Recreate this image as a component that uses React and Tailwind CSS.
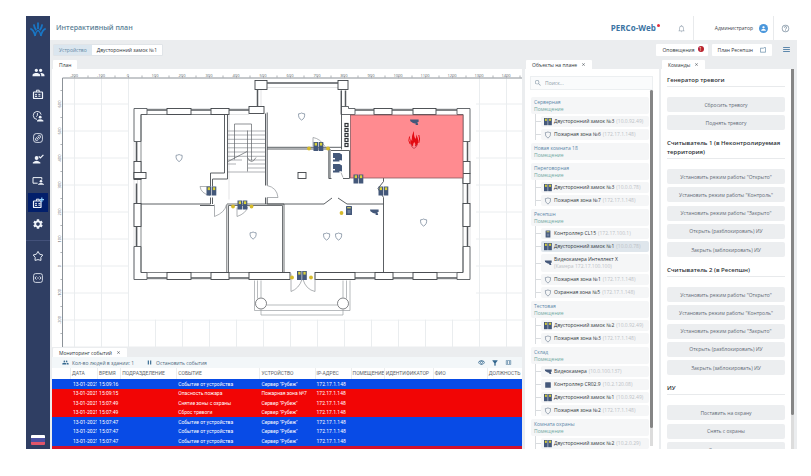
import React from "react";
import {
  MdPeople, MdSettings, MdNotificationsNone, MdPerson, MdHelpOutline, MdMenu, MdSearch, MdPause,
  MdFilterAlt, MdOutlineViewColumn, MdOutlineRemoveRedEye, MdClose,
} from "react-icons/md";

/* ---------- small device icons ---------- */

function LockShape() {
  return (
    <g>
      <rect x="0" y="0" width="4.6" height="9" fill="#44587a" />
      <rect x="5.2" y="0" width="4.6" height="9" fill="#44587a" />
      <rect x="1.2" y="0.8" width="2.3" height="2.8" fill="#d8cf3a" />
      <rect x="6.4" y="0.8" width="2.3" height="2.8" fill="#d8cf3a" />
    </g>
  );
}

function ShieldShape() {
  return (
    <path
      d="M0.6 1.3Q2.4 1.2 3.6 0.5Q4.8 1.2 6.6 1.3Q7.2 5.6 3.6 7.6Q0 5.6 0.6 1.3Z"
      fill="none" stroke="#6b7c90" strokeWidth="0.7"
    />
  );
}

function CameraShape() {
  return <path d="M0 0H8.6V2.6H7.4L8.2 5.6H5.4L6 4.2L3 3.4L0.4 1.8Z" fill="#44587a" />;
}

function ControllerShape() {
  return (
    <g>
      <rect width="6" height="9" rx="0.5" fill="#44587a" />
      <rect x="1.2" y="1" width="3.6" height="1.4" fill="#c9c46a" />
      <rect x="1.5" y="4" width="3" height="3.4" fill="#6d7f9d" />
    </g>
  );
}

function DeviceIcon({ kind }) {
  return (
    <svg viewBox="0 0 10 10" className="h-2 w-2 shrink-0" aria-hidden="true">
      {kind === "lock" && <LockShape />}
      {kind === "zone" && <g transform="translate(1 0.6) scale(1.1)"><ShieldShape /></g>}
      {kind === "camera" && <g transform="translate(1 2)"><CameraShape /></g>}
      {kind === "controller" && <g transform="translate(2 0.5)"><ControllerShape /></g>}
      {kind === "box" && <rect x="1.5" y="1.5" width="7" height="7" rx="0.5" fill="#44587a" />}
    </svg>
  );
}

/* ---------- sidebar ---------- */

function Logo() {
  return (
    <svg viewBox="0 0 16 15" className="h-[15px] w-4" fill="none" stroke="#1976c5" strokeWidth="1.8" aria-hidden="true">
      <path d="M8 0.5V7" />
      <path d="M3.8 2.4Q4.2 5.4 6.2 8.2" />
      <path d="M12.2 2.4Q11.8 5.4 9.8 8.2" />
      <path d="M0.3 6.6Q3.6 7.6 5.2 14" />
      <path d="M15.7 6.6Q12.4 7.6 10.8 14" />
      <path d="M5.2 14Q5.6 9.6 8 8.2Q10.4 9.6 10.8 14" strokeWidth="1.2" />
    </svg>
  );
}

function BadgeBriefcase({ plus }) {
  return (
    <svg viewBox="0 0 12 12" className="h-3 w-3" fill="none" stroke="#f0f4fa" strokeWidth="1" aria-hidden="true">
      <rect x="1.5" y="4" width={plus ? 7.5 : 9} height="6.5" rx="0.6" strokeWidth="1.2" />
      <path d="M4.4 4V2.2H7.2V4" />
      <circle cx="4" cy="6.6" r="0.9" fill="#f0f4fa" stroke="none" />
      <path d="M2.8 9Q4 7.6 5.2 9M6.4 6.4H8.4M6.4 8.2H8.4" />
      {plus && <path d="M9.8 0.5V5M7.6 2.7H12" stroke="#8fd0ff" strokeWidth="1.2" />}
    </svg>
  );
}

function ClockPerson() {
  return (
    <svg viewBox="0 0 12 12" className="h-3 w-3" fill="none" stroke="#f0f4fa" strokeWidth="0.9" aria-hidden="true">
      <path d="M5 9.4A4 4 0 1 1 9.2 4.6" />
      <path d="M5.4 3V5.6L4.2 6.6" />
      <circle cx="8.2" cy="7.2" r="1.4" fill="#f0f4fa" stroke="none" />
      <path d="M5 11.4V10.6Q8.2 8 11.4 10.6V11.4Z" fill="#f0f4fa" stroke="none" />
    </svg>
  );
}

function LinkBox() {
  return (
    <svg viewBox="0 0 12 12" className="h-3 w-3" fill="none" stroke="#e3e9f2" strokeWidth="0.9" aria-hidden="true">
      <rect x="1.6" y="1.6" width="8.8" height="8.8" rx="2.6" />
      <path d="M3.8 8.3Q2.9 7 4.2 5.9L5.6 4.6M8.2 3.7Q9.1 5 7.8 6.1L6.4 7.4M4.8 7.2L7.2 4.8M6 4.2Q7.4 2.8 8.3 3.8M6 7.8Q4.6 9.2 3.7 8.2" />
    </svg>
  );
}

function ScreenPerson() {
  return (
    <svg viewBox="0 0 12 12" className="h-3 w-3" fill="none" stroke="#f0f4fa" strokeWidth="1" aria-hidden="true">
      <path d="M5.6 8.2H1V2.6H9.8V4.6" />
      <circle cx="9" cy="6.2" r="1.3" fill="#f0f4fa" stroke="none" />
      <path d="M6 9.8V9.2Q9 7 12 9.2V9.8Z" fill="#f0f4fa" stroke="none" />
    </svg>
  );
}

function PersonCheck() {
  return (
    <svg viewBox="0 0 12 12" className="h-3 w-3" aria-hidden="true">
      <circle cx="4.6" cy="5" r="1.9" fill="#f0f4fa" />
      <path d="M0.8 10.4V9.4Q4.6 6.2 8.4 9.4V10.4Z" fill="#f0f4fa" />
      <path d="M6.8 3.4L8.4 5L11.4 1.8" fill="none" stroke="#f0f4fa" strokeWidth="1.2" />
    </svg>
  );
}

function StarOutline() {
  return (
    <svg viewBox="0 0 12 12" className="h-3 w-3" fill="none" stroke="#e3e9f2" strokeWidth="1" strokeLinejoin="round" aria-hidden="true">
      <path d="M6 1.4L7.6 4.2L10.8 5L8.8 7.4L9 10.4L6 9.6L3 10.4L3.2 7.4L1.2 5L4.4 4.2Z" />
    </svg>
  );
}

function BroadcastBox() {
  return (
    <svg viewBox="0 0 12 12" className="h-3 w-3" fill="none" stroke="#e3e9f2" strokeWidth="0.9" aria-hidden="true">
      <rect x="1.6" y="1.6" width="8.8" height="8.8" rx="2" />
      <path d="M4.4 4.4L3 6L4.4 7.6M7.6 4.4L9 6L7.6 7.6" />
      <circle cx="6" cy="6" r="0.7" fill="#e3e9f2" stroke="none" />
    </svg>
  );
}

const NAV = [
  { label: "Персонал", icon: <MdPeople size={13} /> },
  { label: "Бюро пропусков", icon: <BadgeBriefcase /> },
  { label: "УРВ", icon: <ClockPerson /> },
  { label: "Заказ пропуска", icon: <LinkBox /> },
  { label: "Верификация", icon: <PersonCheck /> },
  { label: "Мониторинг", icon: <ScreenPerson /> },
  { label: "Контроль доступа", icon: <BadgeBriefcase plus />, active: true },
  { label: "Администрирование", icon: <MdSettings size={12} /> },
];

function Sidebar() {
  return (
    <nav className="flex w-6 shrink-0 flex-col items-center bg-[#2f3e63] text-[#f0f4fa]">
      <div className="pt-[6px] pb-[26px]"><Logo /></div>
      <div className="flex h-[171px] shrink-0 flex-col justify-between">
        {NAV.map((n) => (
          <button
            key={n.label}
            aria-label={n.label}
            className={`flex h-[19px] w-5 items-center justify-center ${n.active ? "bg-[#021f6b]" : ""}`}
          >
            {n.icon}
          </button>
        ))}
      </div>
      <div className="mt-[6px] w-full border-t border-[#43517a]" />
      <button aria-label="Избранное" className="mt-[5px] flex h-[19px] w-5 items-center justify-center"><StarOutline /></button>
      <button aria-label="Сервис" className="mt-[3px] flex h-[19px] w-5 items-center justify-center"><BroadcastBox /></button>
      <button aria-label="Язык: русский" className="mt-auto mb-1 flex h-[10px] w-[14px] flex-col overflow-hidden rounded-[1px]">
        <span className="h-[3px] w-full bg-white" />
        <span className="h-[4px] w-full bg-[#4a4fa0]" />
        <span className="h-[3px] w-full bg-[#e0566a]" />
      </button>
    </nav>
  );
}

/* ---------- header ---------- */

function Header() {
  return (
    <header className="flex h-6 shrink-0 items-center bg-white pl-[6px]">
      <h1 className="text-[7px] leading-3 font-semibold text-[#5c7f96]">Интерактивный план</h1>
      <div className="ml-auto flex h-full items-center">
        <div className="flex h-full items-center text-[8px] leading-3 font-bold text-[#3b74a3]">
          PERCo-Web<span className="mb-[6px] ml-px h-[3px] w-[3px] rounded-full bg-[#e0303c]" />
        </div>
        <button aria-label="Уведомления" className="ml-[17px] text-[#a9b4bf]"><MdNotificationsNone size={9} /></button>
        <div className="ml-[7px] flex h-full items-center gap-[6px] border-l border-[#e8eaec] pr-[5px] pl-[21px]">
          <span className="text-[5px] leading-2 font-medium text-[#3c4248]">Администратор</span>
          <span className="flex h-[9px] w-[9px] items-center justify-center rounded-full bg-[#4a97dc] text-white"><MdPerson size={7} /></span>
        </div>
        <button aria-label="Справка" className="flex h-full w-6 items-center justify-center border-l border-[#e8eaec] text-[#8496a6]"><MdHelpOutline size={9} /></button>
      </div>
    </header>
  );
}

function SubHeader() {
  return (
    <div className="flex h-5 shrink-0 items-center pr-[6px] pl-[3px] text-[5px] leading-2 font-medium">
      <div className="flex h-3 overflow-hidden rounded-[1px] border border-[#e0e4e8]">
        <a href="#device" className="flex items-center bg-[#dbe6ef] px-[5px] text-[#6489a6]">Устройство</a>
        <span className="flex items-center bg-white px-[5px] text-[#30363c]">Двусторонний замок №1</span>
      </div>
      <div className="ml-auto flex items-center gap-1 pb-px text-[#30363c]">
        <button className="flex h-3 items-center gap-[3px] rounded-[1px] bg-white pr-[4px] pl-[6px]">
          Оповещения
          <span className="mb-[2px] flex h-[6px] w-[6px] items-center justify-center rounded-full bg-[#b8232f] text-[5px] leading-[6px] text-white">1</span>
        </button>
        <button className="flex h-3 items-center gap-[7px] rounded-[1px] bg-white px-[6px]">
          План Ресепшн
          <svg viewBox="0 0 6 6" className="h-[6px] w-[6px]" fill="none" stroke="#6489a6" strokeWidth="0.7" aria-hidden="true">
            <path d="M0.4 1.2H3.4L4 0.6H5.6V5.2H0.4Z" />
          </svg>
        </button>
        <button aria-label="Меню" className="ml-[6px] text-[#2f6796]"><MdMenu size={9} /></button>
      </div>
    </div>
  );
}

function Tab({ children, closable }) {
  return (
    <div className="flex h-[9px] shrink-0 pl-px">
      <div className="flex items-center gap-1 rounded-t-[1px] bg-white px-[6px] text-[5px] leading-2 font-medium whitespace-nowrap text-[#30363c]">
        {children}
        {closable && <button aria-label="Закрыть" className="text-[#50575e]"><MdClose size={5} /></button>}
      </div>
    </div>
  );
}

/* ---------- floor plan ---------- */

const at = (x, y) => `translate(${x} ${y})`;

const BLOCKS = [
  [167, 109, 24, 6], [211, 109, 18, 6], [249, 107, 15, 7],
  [374, 109, 18, 6], [413, 109, 23, 6],
  [255, 81, 12, 9], [338, 81, 10, 9],
  [134, 162, 7, 18], [134, 204, 7, 23], [463, 162, 7, 12], [463, 174, 7, 10], [463, 204, 7, 23],
  [167, 273, 24, 7], [211, 273, 18, 7], [249, 273, 41, 7],
  [315, 273, 40, 7], [375, 273, 18, 7], [413, 273, 24, 7],
  [134, 173, 12, 6], [298, 173, 8, 6],
];

const H_WINDOWS = [
  [147, 167, 110], [191, 211, 110], [229, 249, 110], [355, 374, 110], [392, 413, 110], [436, 457, 110],
  [147, 167, 278], [191, 211, 278], [229, 249, 278], [355, 375, 278], [393, 413, 278], [437, 457, 278],
  [267, 338, 83],
];

const V_WINDOWS = [
  [136, 142, 162], [136, 184, 204], [136, 227, 247],
  [467, 142, 162], [467, 184, 204], [467, 227, 247],
  [257, 90, 107], [345, 91, 107],
];

const LOCKS = [[206.5, 187], [237.5, 201], [313.5, 142.5], [353.5, 175], [378.5, 187], [297, 271.5]];
const READERS = [[233, 207], [251.5, 207], [309, 149], [328, 149], [341.5, 213.5], [292, 278], [311, 278]];
const ZONES = [[175.5, 154.5], [298, 113], [249.5, 232], [323, 233], [335, 233], [420, 219]];

function FloorPlan() {
  const cols = Array.from({ length: 17 }, (_, i) => i);
  const rows = Array.from({ length: 10 }, (_, i) => i);
  return (
    <svg
      viewBox="52 69 470 279"
      preserveAspectRatio="xMidYMid slice"
      className="block h-full w-full"
      role="img"
      aria-label="План этажа"
    >
      <rect x="52" y="69" width="470" height="279" fill="#fff" />
      <g stroke="#eaedef" strokeWidth="1">
        {cols.map((i) => <path key={i} d={`M${74.5 + 27 * i} 79V348`} />)}
        {rows.map((i) => <path key={i} d={`M62 ${104.5 + 27 * i}H522`} />)}
      </g>
      <rect x="129" y="79.5" width="347" height="240.5" fill="#fff" />
      <g stroke="#8c9298" strokeWidth="1">
        <path d="M62.5 348V78.5H522" fill="none" />
        {cols.map((i) => <path key={i} d={`M${74.5 + 27 * i} 78V76.8M${88 + 27 * i} 78V76`} strokeWidth="0.7" />)}
        {rows.map((i) => <path key={i} d={`M62 ${91 + 27 * i}H60.4`} strokeWidth="0.7" />)}
      </g>
      <g fill="#62686e" fontSize="4" fontFamily="Open Sans, sans-serif" textAnchor="middle">
        {cols.map((i) => <text key={i} x={74 + 27 * i} y="77">{(i - 2) * 100}</text>)}
        {rows.slice(0, 9).map((i) => (
          <text key={i} transform={`translate(61 ${104.5 + 27 * i}) rotate(-90)`}>{600 - i * 100}</text>
        ))}
      </g>

      {/* outer walls */}
      <g fill="none" stroke="#d0d2d4" strokeWidth="0.6">
        <path d="M134 142V280M137.5 142V247M470 142V247M147 109H249M147 115H249M355 109H457M147 273H290M147 280H290M315 273H457M315 280H457M267 88H341M261 90V107M229 114V200" />
      </g>
      <g fill="none" stroke="#55595d" strokeWidth="0.9">
        <path d="M134 142V109H147V115H141V142Z" />
        <path d="M134 247V280H147V273H141V247Z" />
        <path d="M457 109H470V142H463V115H457Z" />
        <path d="M470 247V280H457V273H463V247Z" />
        <path d="M341 91V115H355V109H348.5V107H341" />
        <path d="M141 115V273M463 178V273M141 273H290M315 273H463M141 115H224" strokeWidth="0.7" />
      </g>
      <g fill="#fff" stroke="#3f4347" strokeWidth="0.9">
        {BLOCKS.map(([x, y, w, h]) => (
          <rect key={`${x}-${y}`} x={x} y={y} width={w} height={h} />
        ))}
      </g>
      <g stroke="#55595d" strokeWidth="1.5">
        {H_WINDOWS.map(([a, b, y]) => <path key={`${a}-${y}`} d={`M${a} ${y + 0.5}H${b}`} />)}
        {V_WINDOWS.map(([x, a, b]) => <path key={`${x}-${a}`} d={`M${x + 0.5} ${a}V${b}`} />)}
      </g>

      {/* inner walls */}
      <g fill="none" stroke="#4a4e52" strokeWidth="0.9">
        <path d="M224.5 115V173.5H210.5V187M227.5 115V179.5H212.5V187M210.5 198V204.5H141M212.5 198V204.5M200 206H214" />
        <path d="M265.5 114V186M267.2 113V186M265.5 198V204.5M267.2 198V204.5H324L332 198.5M338 198.5L347 204.5H383.5V273" />
        <path d="M227 204.5H284V273M228.5 273V206H282.5V273M226.8 205V273" strokeWidth="0.8" />
        <path d="M267 147.8H341.5M267 149.5H330V179M341.5 91V150M328.8 149V179H331.5M331 151H349.5V179H343M383.5 178V182L378 189L383.5 198V204.5" />
      </g>
      <g fill="none" stroke="#8d9195" strokeWidth="0.7">
        <path d="M228 131.5H265M228 135.5H265M228 139.8H265M228 144H265M228 148.3H265M228 152.5H265M228 156.8H265M248 160.5H265M248 164.5H265M248 168.5H265M228 172.5H265M228 160.5H242M228 164.5H236" />
        <path d="M234.5 160V124.5H251.5V161M247.5 131V172M247 152L228 162M247.5 158Q251.5 166 256 158" stroke="#5f6367" />
        <path d="M211 187H200Q201 194 210 196M214.5 205V217Q225 213 226.5 205M267 186Q277 188 278 198H267M237 208V217Q246 214 248 207M313 147V138Q320 139 325 147M291 274V292Q299 289 302 280M315 274V292Q306 290 303 280M341 173L343 178" />
      </g>
      <g fill="#fff" stroke="#2f3337" strokeWidth="1.2">
        {[124, 129, 134, 139, 144].map((y) => <rect key={y} x="345" y={y} width="3" height="3" />)}
      </g>

      {/* porch */}
      <g fill="none" stroke="#9a9ea2" strokeWidth="0.7">
        <path d="M254.5 281V311H350V281M257.5 281V299M261 281V298M343 281V298M346.5 281V299M267 305.5H337M261 310V315.5H343V310" />
        <circle cx="261" cy="304" r="5.5" fill="#fff" stroke="#4a4e52" />
        <circle cx="343" cy="304" r="5.5" fill="#fff" stroke="#4a4e52" />
      </g>

      {/* room on fire */}
      <rect x="350.5" y="115.5" width="112.5" height="63" fill="#ff8b90" stroke="#8a5a60" strokeWidth="0.8" />
      <path
        d="M413 147Q408.6 143.6 411 138.6Q411.2 141 412.2 141.6Q411.2 136 414 131.5Q413.6 137 415.6 139.6Q416.6 137.6 416 135Q419.6 140.6 417.6 144.4Q416.8 146.4 415 147Q416.4 144.6 414.2 142.4Q412.6 144.6 413 147Z"
        fill="#e30b12"
      />
      <path d="M409.6 137Q407.8 141.4 410.2 144.6M418.8 135.5Q420.4 139.6 418.8 143.4" stroke="#e30b12" strokeWidth="1" fill="none" />
      <path d="M411 144.5Q411 147.6 414 149Q417 147.6 417.5 144.5" stroke="#b03040" strokeWidth="0.7" fill="none" />

      {/* devices */}
      {ZONES.map(([x, y]) => <g key={x} transform={at(x, y)}><ShieldShape /></g>)}
      {LOCKS.map(([x, y]) => <g key={x} transform={at(x, y)}><LockShape /></g>)}
      {READERS.map(([x, y]) => <circle key={`${x}-${y}`} cx={x} cy={y} r="1.9" fill="#d6bb2c" />)}
      <g transform={at(410, 120)}><CameraShape /></g>
      <g transform={at(370, 210)}><CameraShape /></g>
      <g transform={at(346, 206.5)}><ControllerShape /></g>
      <path d="M333 153.5H339.5L342 155V161L339.5 160.5V162H333V160H335V158.5H333ZM333 164.5H339.5L342 166V172L339.5 171.5V173H333V171H335V169.5H333Z" fill="#44587a" />
    </svg>
  );
}

/* ---------- event log ---------- */

const COLUMNS = [
  ["", "w-[18px]"], ["ДАТА", "w-[27px]"], ["ВРЕМЯ", "w-[23px]"], ["ПОДРАЗДЕЛЕНИЕ", "w-[56px]"],
  ["СОБЫТИЕ", "w-[83px]"], ["УСТРОЙСТВО", "w-[55px]"], ["IP-АДРЕС", "w-[36px]"], ["ПОМЕЩЕНИЕ", "w-[33px]"],
  ["ИДЕНТИФИКАТОР", "w-[49px]"], ["ФИО", "w-[54px]"], ["ДОЛЖНОСТЬ", "w-[35px]"],
];

const EVENTS = [
  ["15:09:16", "Событие от устройства", "Сервер \"Рубеж\"", false],
  ["15:09:15", "Опасность пожара", "Пожарная зона №7", true],
  ["15:07:49", "Снятие зоны с охраны", "Сервер \"Рубеж\"", true],
  ["15:07:49", "Сброс тревоги", "Сервер \"Рубеж\"", true],
  ["15:07:47", "Событие от устройства", "Сервер \"Рубеж\"", false],
  ["15:07:47", "Событие от устройства", "Сервер \"Рубеж\"", false],
  ["15:07:47", "Событие от устройства", "Сервер \"Рубеж\"", false],
];

function EventLog() {
  return (
    <section className="shrink-0">
      <div className="pt-px"><Tab closable>Мониторинг событий</Tab></div>
      <div className="flex h-[11px] items-center bg-[#f3f7f9] px-[10px] text-[5px] leading-2 text-[#4f6a7e]">
        <MdPeople size={7} className="mr-[3px] text-[#35688f]" />
        Кол-во людей в здании: 1
        <button className="ml-3 flex items-center gap-[3px]">
          <MdPause size={7} className="text-[#35688f]" />
          Остановить события
        </button>
        <div className="ml-auto flex items-center gap-[6px] text-[#35688f]">
          <button aria-label="Показать"><MdOutlineRemoveRedEye size={7} /></button>
          <button aria-label="Фильтр"><MdFilterAlt size={8} /></button>
          <button aria-label="Столбцы"><MdOutlineViewColumn size={7} /></button>
        </div>
      </div>
      <table className="w-full table-fixed border-collapse bg-white text-left font-['Roboto',sans-serif] text-[5px] leading-[9px] whitespace-nowrap text-white">
        <thead className="leading-[11px] text-[#5d6368]">
          <tr>
            {COLUMNS.map(([name, width]) => (
              <th key={name || "mark"} scope="col" className={`${width} overflow-hidden bg-[linear-gradient(#eceeef,#eceeef)] bg-[length:1px_100%] bg-no-repeat p-0 pl-[2px] font-normal first:bg-none`}>
                {name}
              </th>
            ))}
          </tr>
        </thead>
        <tbody>
          {EVENTS.map(([time, event, device, alarm], i) => (
            <tr key={i} className={`${i % 2 === 0 ? "h-[10px]" : "h-[9px]"} ${alarm ? "bg-[#f20505]" : "bg-[#084be6]"}`}>
              <td className="p-0" />
              <td className="overflow-hidden p-0 pl-[3px]">13-01-2021</td>
              <td className="overflow-hidden p-0 pl-[2px]">{time}</td>
              <td className="p-0" />
              <td className="overflow-hidden p-0 pl-[2px]">{event}</td>
              <td className="overflow-hidden p-0 pl-[2px]">{device}</td>
              <td className="overflow-hidden p-0 pl-[2px]">172.17.1.148</td>
              <td className="p-0" /><td className="p-0" /><td className="p-0" /><td className="p-0" />
            </tr>
          ))}
        </tbody>
      </table>
      <div className="h-[3px] bg-[#d3122c]" />
    </section>
  );
}

/* ---------- object tree ---------- */

const TREE = [
  ["Серверная", [["lock", "Двусторонний замок №3", "(10.0.92.49)"], ["zone", "Пожарная зона №6", "(172.17.1.148)"]]],
  ["Новая комната 18", []],
  ["Переговорная", [["lock", "Двусторонний замок №3", "(10.0.0.78)"], ["zone", "Пожарная зона №7", "(172.17.1.148)"]]],
  ["Ресепшн", [
    ["controller", "Контроллер CL15", "(172.17.100.1)"],
    ["lock", "Двусторонний замок №1", "(10.0.0.78)", "selected"],
    ["camera", "Видеокамера Интеллект X", "(Камера 172.17.100.100)", "tall"],
    ["zone", "Пожарная зона №1", "(172.17.1.148)"],
    ["zone", "Охранная зона №5", "(172.17.1.148)"],
  ]],
  ["Тестовая", [["lock", "Двусторонний замок №2", "(10.0.92.49)"], ["zone", "Пожарная зона №3", "(172.17.1.148)"]]],
  ["Склад", [
    ["camera", "Видеокамера", "(10.0.100.137)"],
    ["box", "Контроллер CR02.9", "(10.2.120.08)"],
    ["lock", "Двусторонний замок №1", "(10.0.92.49)"],
    ["zone", "Пожарная зона №2", "(172.17.1.148)"],
  ]],
  ["Комната охраны", [["lock", "Двусторонний замок №2", "(10.2.0.29)"]]],
];

function ObjectsPanel() {
  return (
    <section className="flex w-[134px] shrink-0 flex-col">
      <Tab closable>Объекты на плане</Tab>
      <div className="flex min-h-0 flex-1 flex-col bg-white pt-[7px] pr-[6px] pl-[5px]">
        <label className="flex h-[14px] shrink-0 items-center gap-[3px] border border-[#eceff1] bg-[#fafbfc] px-[3px] text-[#8fa0ae]">
          <MdSearch size={8} className="shrink-0" />
          <input type="search" placeholder="Поиск..." aria-label="Поиск" className="w-full min-w-0 bg-transparent text-[5px] leading-2 outline-none placeholder:text-[#8f9ca8]" />
        </label>
        <div className="flex min-h-0 flex-1">
          <div className="flex min-h-0 flex-1 flex-col gap-[3px] overflow-hidden pt-[7px] pr-px pl-px text-[5px] leading-[7px]">
            {TREE.map(([room, items]) => (
              <div key={room} className="shrink-0">
                <div className="h-[17px] rounded-[2px] bg-[#f5f6f7] px-[3px] pt-[2px]">
                  <div className="text-[#5b86a8]">{room}</div>
                  <div className="text-[#6fa79f]">Помещение</div>
                </div>
                {items.length > 0 && (
                  <ul className="ml-1 border-l border-[#d9dcdf]">
                    {items.map(([kind, name, addr, state]) => (
                      <li key={name} className="flex items-center pt-[2px]">
                        <span className="w-[5px] shrink-0 border-t border-[#d9dcdf]" />
                        <button
                          className={`flex min-w-0 flex-1 items-center gap-[2px] overflow-hidden rounded-[2px] pl-[3px] text-left whitespace-nowrap ${
                            state === "tall" ? "h-[18px]" : "h-[11px]"
                          } ${state === "selected" ? "bg-[#dfe6ec]" : "bg-[#f5f6f7]"}`}
                        >
                          <DeviceIcon kind={kind} />
                          <span className={`flex ${state === "tall" ? "flex-col" : "gap-[2px]"}`}>
                            <span className="font-medium text-[#30363c]">{name}</span>
                            <span className="text-[#bcc1c6]">{addr}</span>
                          </span>
                        </button>
                      </li>
                    ))}
                  </ul>
                )}
              </div>
            ))}
          </div>
          <div className="mb-[3px] w-[3px] bg-[#dcdcdc]"><div className="h-[95%] rounded-full bg-[#858585]" /></div>
        </div>
      </div>
    </section>
  );
}

/* ---------- commands ---------- */

const READER_COMMANDS = [
  "Установить режим работы \"Открыто\"",
  "Установить режим работы \"Контроль\"",
  "Установить режим работы \"Закрыто\"",
  "Открыть (разблокировать) ИУ",
  "Закрыть (заблокировать) ИУ",
];

const COMMANDS = [
  ["Генератор тревоги", ["Сбросить тревогу", "Поднять тревогу"], "h-[33px]"],
  ["Считыватель 1 (в Неконтролируемая территория)", READER_COMMANDS, "h-[88px]"],
  ["Считыватель 2 (в Ресепшн)", READER_COMMANDS, "h-[88px]"],
  ["ИУ", ["Поставить на охрану", "Снять с охраны", "Снять тревогу"], "h-[52px]"],
];

function CommandsPanel() {
  return (
    <section className="flex w-[136px] shrink-0 flex-col">
      <Tab closable>Команды</Tab>
      <div className="flex min-h-0 flex-1">
        <div className="flex min-h-0 flex-1 flex-col gap-[9px] overflow-hidden bg-white pt-[7px] pr-[6px] pl-[6px]">
          {COMMANDS.map(([title, commands, height]) => (
            <div key={title} className="shrink-0">
              <h2 className="border-b border-[#e8eaec] pb-px text-[6px] leading-[9px] font-semibold text-[#2b3035]">{title}</h2>
              <div className={`mt-[10px] flex flex-col justify-between ${height}`}>
                {commands.map((c) => (
                  <button key={c} className="h-[15px] rounded-[2px] bg-[#eceef0] text-[5px] leading-2 font-medium whitespace-nowrap text-[#5f6a75]">{c}</button>
                ))}
              </div>
            </div>
          ))}
        </div>
        <div className="mr-[3px] w-[3px] bg-[#dcdcdc]"><div className="h-[91%] rounded-b-full bg-[#858585]" /></div>
      </div>
    </section>
  );
}

export default function App() {
  return (
    <div className="flex h-screen overflow-hidden bg-white pt-4 pr-[14px] pb-[27px] pl-[26px] font-['Open_Sans','Noto_Sans',sans-serif]">
      <Sidebar />
      <div className="flex min-w-0 flex-1 flex-col bg-[#ebedef]">
        <Header />
        <SubHeader />
        <main className="flex min-h-0 flex-1 gap-[2px] pl-[2px]">
          <div className="mr-px flex min-w-0 flex-1 flex-col">
            <Tab>План</Tab>
            <div className="min-h-0 flex-1 overflow-hidden bg-white"><FloorPlan /></div>
            <EventLog />
          </div>
          <ObjectsPanel />
          <CommandsPanel />
        </main>
      </div>
    </div>
  );
}
